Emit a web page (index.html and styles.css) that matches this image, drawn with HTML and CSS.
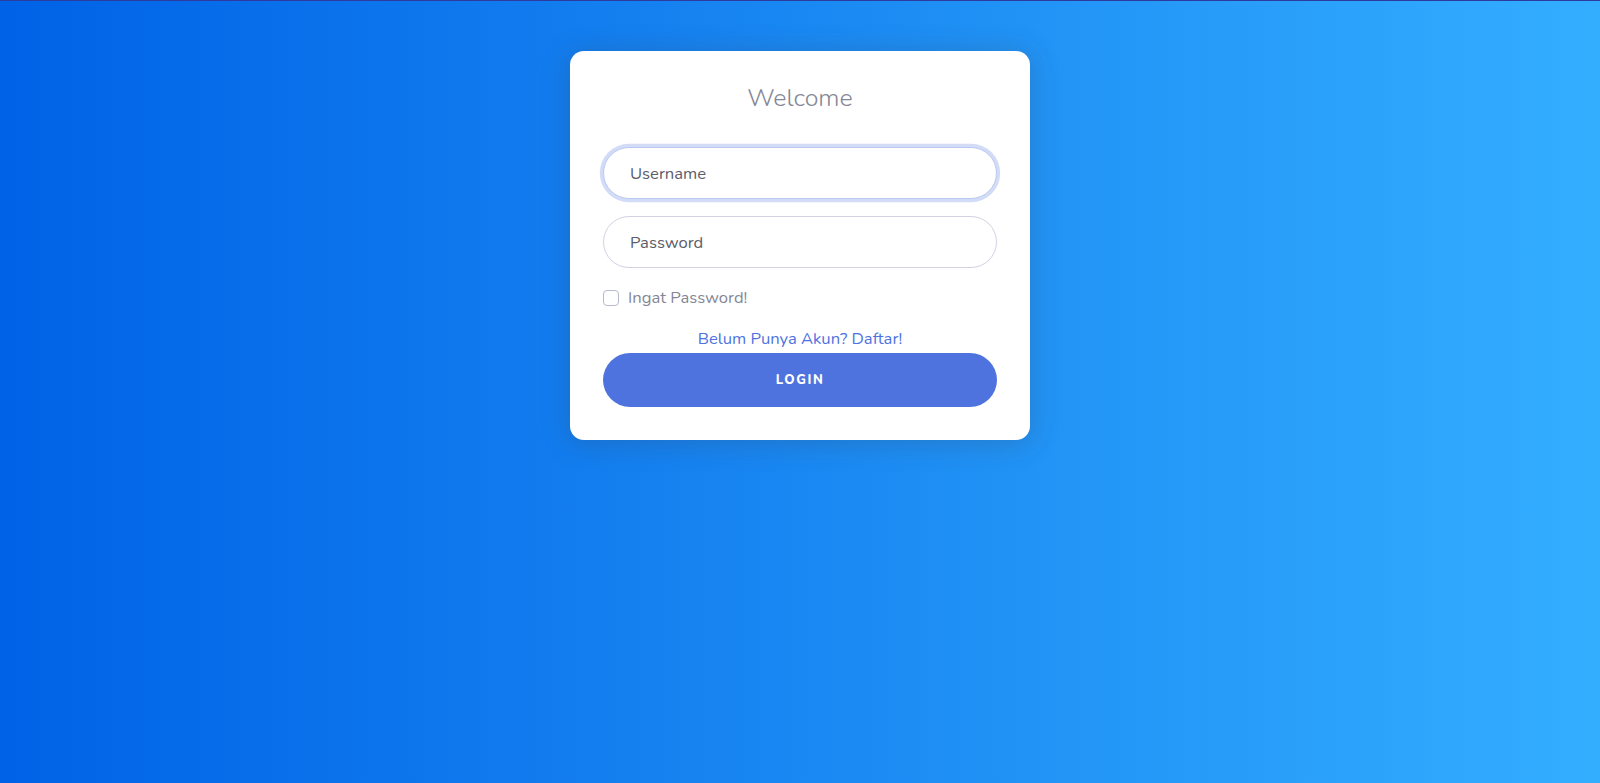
FILE: index.html
```html
<!DOCTYPE html>
<html lang="id">
<head>
    <meta charset="UTF-8">
    <title>Login</title>
    <meta name="viewport" content="width=device-width, initial-scale=1.0">
    <link rel="stylesheet" href="styles.css">
</head>
<body>
    <div class="wrapper">
        <div class="card">
            <h4 class="title">Welcome</h4>
            <form class="user">
                <input type="text" class="form-control focused" placeholder="Username">
                <input type="password" class="form-control pass" placeholder="Password">
                <label class="check">
                    <input type="checkbox">
                    <span>Ingat Password!</span>
                </label>
                <div class="center">
                    <a href="#" class="link">Belum Punya Akun? Daftar!</a>
                </div>
                <button type="button" class="btn-login">Login</button>
            </form>
        </div>
    </div>
</body>
</html>
```

FILE: styles.css
```css
* {
    box-sizing: border-box;
    margin: 0;
    padding: 0;
}
html, body {
    height: 100%;
}
body {
    font-family: "Nunito", "Lato", sans-serif;
    font-size: 16.6px;
    background: linear-gradient(to right, #0062e6, #33aeff);
    border-top: 1px solid #2d3a9e;
    overflow: hidden;
}
.wrapper {
    display: flex;
    justify-content: center;
    padding-top: 50px;
}
.card {
    width: 460px;
    background: #fff;
    border-radius: 14px;
    padding: 32px 33px 33px;
    box-shadow: 0 .15rem 1.75rem 0 rgba(58, 59, 69, .25);
}
.title {
    text-align: center;
    font-size: 25px;
    font-weight: 300;
    color: #858796;
    line-height: 30px;
    margin-bottom: 34px;
}
.user {
    display: flex;
    flex-direction: column;
}
.form-control {
    display: block;
    width: 100%;
    height: 52px;
    padding: 0 26px;
    font-family: inherit;
    font-size: 16.6px;
    color: #6e707e;
    border: 1px solid #d1d3e2;
    border-radius: 10rem;
    margin-bottom: 17px;
    outline: none;
}
.form-control.pass {
    margin-bottom: 18px;
}
.form-control::placeholder {
    color: #5a5c69;
}
.form-control.focused {
    border-color: #bac8f3;
    box-shadow: 0 0 0 .2rem rgba(78, 115, 223, .25);
}
.check {
    display: flex;
    align-items: center;
    gap: 9px;
    color: #858796;
    line-height: 24px;
    margin-bottom: 17px;
}
.check input {
    appearance: none;
    width: 16px;
    height: 16px;
    border: 1px solid #b7b9cc;
    border-radius: 4px;
    background: #fff;
}
.center {
    text-align: center;
    line-height: 24px;
    margin-bottom: 2px;
}
.link {
    color: #4e73df;
    text-decoration: none;
}
.btn-login {
    height: 54px;
    width: 100%;
    border: none;
    border-radius: 10rem;
    background: #4e73df;
    color: #fff;
    font-family: inherit;
    font-size: 13px;
    font-weight: 800;
    letter-spacing: .1rem;
    text-transform: uppercase;
}
```
